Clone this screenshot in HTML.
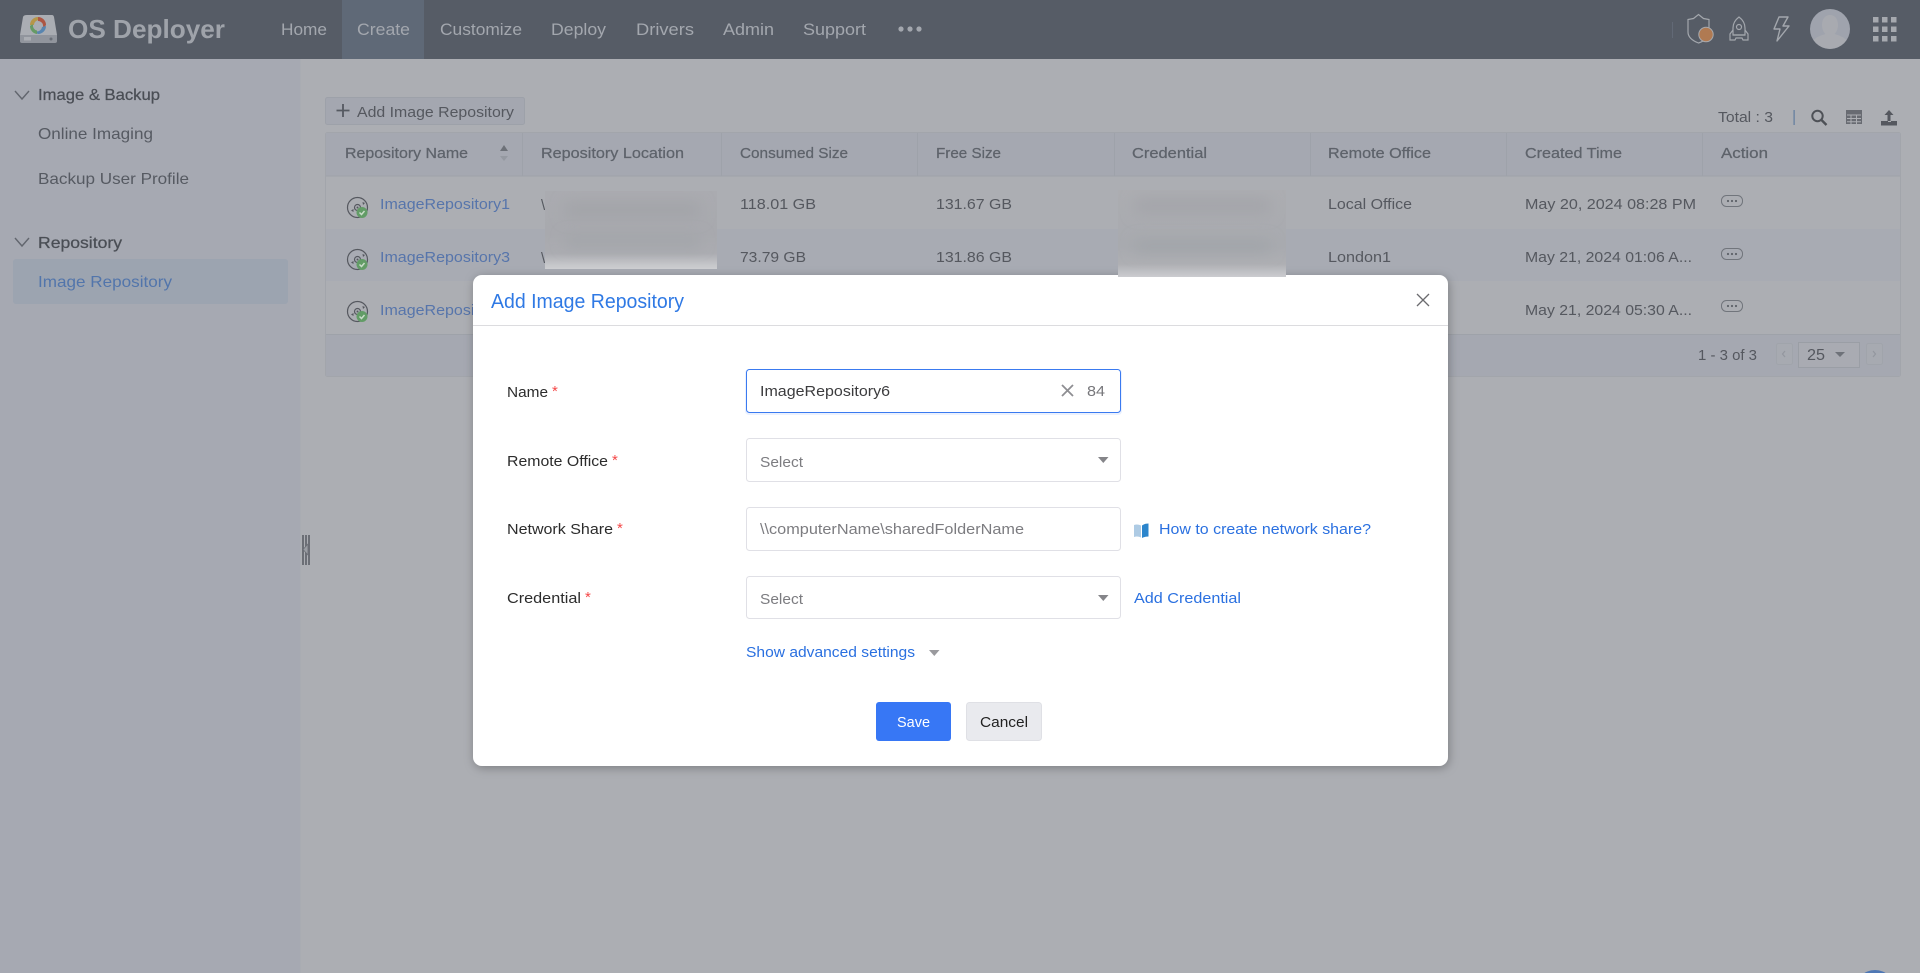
<!DOCTYPE html>
<html lang="en"><head><meta charset="utf-8"><title>OS Deployer - Add Image Repository</title>
<style>
html,body{margin:0;padding:0;width:1920px;height:973px;overflow:hidden;background:#acaeb3}
svg{display:block;position:absolute;left:0;top:0}
text{font-family:"Liberation Sans",Arial,sans-serif;font-size:15px;white-space:pre}
.nav{font-size:17px;fill:#a3a7ae}
.sec{font-size:16px;fill:#4a4e55;stroke:#4a4e55;stroke-width:.25}
.item{font-size:16px;fill:#565a62}
.th{fill:#5e636b;stroke:#5e636b;stroke-width:.25}
.td{fill:#55585f}
.lnk{fill:#5775ab}
.lab{fill:#2c2c2c}
.ph{fill:#7c7c80}
.blue{fill:#2a70e0}
.req{fill:#f54848;font-size:15px}
</style></head><body>
<svg width="1920" height="973" viewBox="0 0 1920 973" xmlns="http://www.w3.org/2000/svg">
<defs>
<filter id="sh" x="-5%" y="-5%" width="110%" height="110%"><feDropShadow dx="1" dy="2" stdDeviation="5" flood-color="#000" flood-opacity=".28"/></filter>
<filter id="bl" x="-20%" y="-200%" width="140%" height="500%"><feGaussianBlur stdDeviation="7"/></filter>
<linearGradient id="g1" x1="0" y1="0" x2="0" y2="1"><stop offset="0" stop-color="#aaabb0"/><stop offset=".55" stop-color="#a8a9ae"/><stop offset=".8" stop-color="#abacb1"/><stop offset="1" stop-color="#cfd0d3"/></linearGradient>
<linearGradient id="g2" x1="0" y1="0" x2="0" y2="1"><stop offset="0" stop-color="#acadb1"/><stop offset=".65" stop-color="#a8aaaf"/><stop offset=".85" stop-color="#aeafb3"/><stop offset="1" stop-color="#cbccd0"/></linearGradient>
<clipPath id="c1"><rect x="545" y="191" width="172" height="78"/></clipPath>
<clipPath id="c2"><rect x="1118" y="190" width="168" height="87"/></clipPath>
<g id="disc">
<circle cx="10.5" cy="10.5" r="10" fill="none" stroke="#55585f" stroke-width="1.2"/>
<circle cx="10.5" cy="10.5" r="3" fill="none" stroke="#55585f" stroke-width="1.2"/>
<circle cx="10.5" cy="10.5" r="1" fill="#55585f"/>
<path d="M4 13.500l2.500-1.500v3zM15.500 5l2.500 1-2 2zM5 6.500l2 1.500" fill="#55585f"/>
<circle cx="15" cy="15.500" r="5.500" fill="#629c66"/>
<path d="M12.500 15.500l2 2 3-3.500" fill="none" stroke="#c9dcc9" stroke-width="1.500"/>
</g>
<g id="more">
<rect x="0.500" y="0.500" width="21" height="11" rx="5" fill="none" stroke="#71757c"/>
<circle cx="7" cy="6" r="1.100" fill="#5e6269"/><circle cx="11" cy="6" r="1.100" fill="#5e6269"/><circle cx="15" cy="6" r="1.100" fill="#5e6269"/>
</g>
</defs>

<!-- backgrounds -->
<rect width="1920" height="973" fill="#acaeb3"/>
<rect x="0" y="59" width="300" height="914" fill="#a6a9b2"/>
<rect x="300" y="59" width="1" height="914" fill="#a9acb2"/>
<rect width="1920" height="59" fill="#565c66"/>
<rect x="342" width="82" height="59" fill="#5f6977"/>

<!-- logo -->
<path d="M27 15h25q1.500 0 2 2l3 18H20l3-18q.5-2 4-2z" fill="#aaadb3"/>
<path d="M20 35h37v6q0 2-2 2H22q-2 0-2-2z" fill="#91959d"/>
<rect x="24" y="37" width="7" height="3.500" fill="#aaadb3"/><circle cx="51" cy="39" r="1.500" fill="#6a6f78"/>
<circle cx="38" cy="25.500" r="8.500" fill="#aaadb3"/>
<path d="M30 25a8 8 0 0 1 8-8c2 1 3 2 3 3.500a5 5 0 0 0-7 4.500z" fill="#b59649"/>
<path d="M38 17a8 8 0 0 1 8 8c-1 1.500-2 2-3 2a5 5 0 0 0-5-6z" fill="#ad5643"/>
<path d="M46 26a8 8 0 0 1-8 8c-2-1-3-2-3-3a5 5 0 0 0 7-4z" fill="#5885b0"/>
<path d="M37 34a8 8 0 0 1-7-8c1-1 2-1.500 3-1.500a5 5 0 0 0 4 6z" fill="#669a65"/>
<text x="68" y="38" textLength="157" lengthAdjust="spacingAndGlyphs" style="font-size:26px;font-weight:700" fill="#9fa3aa">OS Deployer</text>

<!-- nav -->
<text class="nav" x="281" y="35" textLength="46" lengthAdjust="spacingAndGlyphs">Home</text>
<text class="nav" x="357" y="35" textLength="53" lengthAdjust="spacingAndGlyphs">Create</text>
<text class="nav" x="440" y="35" textLength="82" lengthAdjust="spacingAndGlyphs">Customize</text>
<text class="nav" x="551" y="35" textLength="55" lengthAdjust="spacingAndGlyphs">Deploy</text>
<text class="nav" x="636" y="35" textLength="58" lengthAdjust="spacingAndGlyphs">Drivers</text>
<text class="nav" x="723" y="35" textLength="51" lengthAdjust="spacingAndGlyphs">Admin</text>
<text class="nav" x="803" y="35" textLength="63" lengthAdjust="spacingAndGlyphs">Support</text>
<circle cx="901" cy="29" r="2.600" fill="#a3a7ae"/><circle cx="910" cy="29" r="2.600" fill="#a3a7ae"/><circle cx="919" cy="29" r="2.600" fill="#a3a7ae"/>

<!-- header right icons -->
<rect x="1672" y="22" width="1" height="16" fill="#626976"/>
<path d="M1698.500 14.500l5 4 5.500 1v13q0 7-10.500 10.500Q1688 39 1688 32V19.500l5.500-1z" fill="none" stroke="#a3a7ad" stroke-width="1.200"/>
<circle cx="1706" cy="34.500" r="7.200" fill="#b07a52" stroke="#a8aaae" stroke-width="1"/>
<path d="M1739 17c-4 3-6 7-6 11v7h12v-7c0-4-2-8-6-11z" fill="none" stroke="#a3a7ad" stroke-width="1.200"/>
<circle cx="1739" cy="27" r="2.500" fill="none" stroke="#a3a7ad" stroke-width="1.200"/>
<path d="M1733 30l-3 4v6h5l1-2h6l1 2h5v-6l-3-4M1733 35h12" fill="none" stroke="#a3a7ad" stroke-width="1.200"/>
<path d="M1779 17h9l-5 9h6l-12 15 3-12h-6z" fill="none" stroke="#a3a7ad" stroke-width="1.400" stroke-linejoin="round"/>
<circle cx="1830" cy="29" r="20" fill="#9fa3ad"/>
<path d="M1830 15c5 0 8 4 8 10 0 4-1.500 7-3.500 9 5 1.500 9 3 12 6a20 20 0 0 1-33 0c3-3 7-4.500 12-6-2-2-3.500-5-3.500-9 0-6 3-10 8-10z" fill="#a8aab0"/>
<g fill="#a6a9af">
<rect x="1873" y="17" width="5.500" height="5.500"/><rect x="1882" y="17" width="5.500" height="5.500"/><rect x="1891" y="17" width="5.500" height="5.500"/>
<rect x="1873" y="26.500" width="5.500" height="5.500"/><rect x="1882" y="26.500" width="5.500" height="5.500"/><rect x="1891" y="26.500" width="5.500" height="5.500"/>
<rect x="1873" y="36" width="5.500" height="5.500"/><rect x="1882" y="36" width="5.500" height="5.500"/><rect x="1891" y="36" width="5.500" height="5.500"/>
</g>

<!-- sidebar -->
<path d="M15 91l7 8 7-8" fill="none" stroke="#62666e" stroke-width="1.400"/>
<text class="sec" x="38" y="100" textLength="122" lengthAdjust="spacingAndGlyphs">Image &amp; Backup</text>
<text class="item" x="38" y="139" textLength="115" lengthAdjust="spacingAndGlyphs">Online Imaging</text>
<text class="item" x="38" y="184" textLength="151" lengthAdjust="spacingAndGlyphs">Backup User Profile</text>
<path d="M15 238l7 8 7-8" fill="none" stroke="#62666e" stroke-width="1.400"/>
<text class="sec" x="38" y="248" textLength="84" lengthAdjust="spacingAndGlyphs">Repository</text>
<rect x="13" y="259" width="275" height="45" rx="3" fill="#9ca4b0"/>
<text class="item" x="38" y="287" textLength="134" lengthAdjust="spacingAndGlyphs" style="fill:#5275ab">Image Repository</text>

<!-- splitter -->
<g fill="#6c6f76"><rect x="302" y="535" width="2" height="30"/><rect x="305" y="535" width="2" height="30"/><rect x="308" y="535" width="2" height="30"/></g>
<path d="M308 544l-5 5.500 5 5.500z" fill="#9a9da3" stroke="#6c6f76" stroke-width=".8"/>

<!-- toolbar -->
<rect x="325.500" y="97.500" width="199" height="27" rx="2" fill="#a4a7b0" stroke="#9da1a9"/>
<path d="M343 104v13M336.500 110.500h13" stroke="#555961" stroke-width="1.800"/>
<text x="357" y="117" textLength="157" lengthAdjust="spacingAndGlyphs" fill="#55585f">Add Image Repository</text>
<text x="1718" y="122" textLength="55" lengthAdjust="spacingAndGlyphs" fill="#55585f">Total : 3</text>
<rect x="1793.500" y="110" width="1.200" height="15" fill="#5f7c9e"/>
<circle cx="1817.500" cy="116" r="5.200" fill="none" stroke="#4e5157" stroke-width="2"/><path d="M1821.500 120l5 5" stroke="#4e5157" stroke-width="2.400"/>
<rect x="1846" y="110" width="16" height="14" fill="#686b72"/>
<path d="M1847 115h14M1847 118.500h14M1847 121.700h14M1851 115v9M1856.500 115v9" stroke="#acaeb3" stroke-width="1"/>
<path d="M1889 110l-4.500 5h3v6h3v-6h3z" fill="#55585f"/><path d="M1881 121h7v1h3v-1h6v4.500h-16z" fill="#55585f"/>

<!-- table -->
<rect x="325.500" y="132.500" width="1575" height="244" rx="2" fill="#acaeb3" stroke="#a2a5ab"/>
<rect x="326" y="133" width="1574" height="43" fill="#a5a8b1"/>
<rect x="326" y="175.500" width="1574" height="1" fill="#9ea2a9"/>
<rect x="326" y="229" width="1574" height="52" fill="#a8abb3"/>
<rect x="326" y="334" width="1574" height="42" fill="#a5a8b1"/>
<rect x="326" y="334" width="1574" height="1" fill="#9ea2a9"/>
<g fill="#9ea2aa">
<rect x="522" y="133" width="1" height="43"/><rect x="721" y="133" width="1" height="43"/><rect x="917" y="133" width="1" height="43"/><rect x="1114" y="133" width="1" height="43"/><rect x="1310" y="133" width="1" height="43"/><rect x="1506" y="133" width="1" height="43"/><rect x="1702" y="133" width="1" height="43"/>
</g>
<text class="th" x="345" y="158" textLength="123" lengthAdjust="spacingAndGlyphs">Repository Name</text>
<path d="M504 145l-4 6h8z" fill="#6d7178"/><path d="M504 161l-4-5h8z" fill="#9599a1"/>
<text class="th" x="541" y="158" textLength="143" lengthAdjust="spacingAndGlyphs">Repository Location</text>
<text class="th" x="740" y="158" textLength="108" lengthAdjust="spacingAndGlyphs">Consumed Size</text>
<text class="th" x="936" y="158" textLength="65" lengthAdjust="spacingAndGlyphs">Free Size</text>
<text class="th" x="1132" y="158" textLength="75" lengthAdjust="spacingAndGlyphs">Credential</text>
<text class="th" x="1328" y="158" textLength="103" lengthAdjust="spacingAndGlyphs">Remote Office</text>
<text class="th" x="1525" y="158" textLength="97" lengthAdjust="spacingAndGlyphs">Created Time</text>
<text class="th" x="1721" y="158" textLength="47" lengthAdjust="spacingAndGlyphs">Action</text>

<!-- row 1 -->
<use href="#disc" x="347" y="197"/>
<text class="lnk" x="380" y="209" textLength="130" lengthAdjust="spacingAndGlyphs">ImageRepository1</text>
<text class="td" x="541" y="210">\</text>
<text class="td" x="740" y="209" textLength="76" lengthAdjust="spacingAndGlyphs">118.01 GB</text>
<text class="td" x="936" y="209" textLength="76" lengthAdjust="spacingAndGlyphs">131.67 GB</text>
<text class="td" x="1328" y="209" textLength="84" lengthAdjust="spacingAndGlyphs">Local Office</text>
<text class="td" x="1525" y="209" textLength="171" lengthAdjust="spacingAndGlyphs">May 20, 2024 08:28 PM</text>
<use href="#more" x="1721" y="195"/>
<!-- row 2 -->
<use href="#disc" x="347" y="249"/>
<text class="lnk" x="380" y="262" textLength="130" lengthAdjust="spacingAndGlyphs">ImageRepository3</text>
<text class="td" x="541" y="263">\</text>
<text class="td" x="740" y="262" textLength="66" lengthAdjust="spacingAndGlyphs">73.79 GB</text>
<text class="td" x="936" y="262" textLength="76" lengthAdjust="spacingAndGlyphs">131.86 GB</text>
<text class="td" x="1328" y="262" textLength="63" lengthAdjust="spacingAndGlyphs">London1</text>
<text class="td" x="1525" y="262" textLength="167" lengthAdjust="spacingAndGlyphs">May 21, 2024 01:06 A...</text>
<use href="#more" x="1721" y="248"/>
<!-- row 3 -->
<use href="#disc" x="347" y="301"/>
<text class="lnk" x="380" y="315" textLength="130" lengthAdjust="spacingAndGlyphs">ImageRepository5</text>
<text class="td" x="1525" y="315" textLength="167" lengthAdjust="spacingAndGlyphs">May 21, 2024 05:30 A...</text>
<use href="#more" x="1721" y="300"/>

<!-- pagination -->
<text x="1698" y="360" textLength="59" lengthAdjust="spacingAndGlyphs" fill="#55585f">1 - 3 of 3</text>
<rect x="1776.500" y="343.500" width="16" height="21" rx="2" fill="#a7aab1" stroke="#a0a4ab"/>
<path d="M1785 351l-2.500 3 2.500 3" fill="none" stroke="#93979f" stroke-width="1.200"/>
<rect x="1798.500" y="342.500" width="61" height="25" fill="#a9abb2" stroke="#9a9ea5"/>
<text x="1807" y="360" textLength="18" lengthAdjust="spacingAndGlyphs" style="font-size:16px" fill="#55585f">25</text>
<path d="M1835 352h10l-5 5z" fill="#6e7279"/>
<rect x="1866.500" y="343.500" width="16" height="21" rx="2" fill="#a7aab1" stroke="#a0a4ab"/>
<path d="M1873 351l2.500 3-2.500 3" fill="none" stroke="#93979f" stroke-width="1.200"/>

<!-- blurred boxes -->
<g clip-path="url(#c1)"><rect x="545" y="191" width="172" height="78" fill="url(#g1)"/>
<rect x="565" y="202" width="135" height="16" fill="#a3a4a9" filter="url(#bl)"/><rect x="565" y="236" width="135" height="10" fill="#a1a4a9" filter="url(#bl)"/></g>

<!-- corner widget -->
<circle cx="1875" cy="990" r="20" fill="#4f78b5"/>

<!-- dialog -->
<rect x="473" y="275" width="975" height="491" rx="9" fill="#fff" filter="url(#sh)"/>
<g clip-path="url(#c2)"><rect x="1118" y="190" width="168" height="87" fill="url(#g2)"/>
<rect x="1135" y="198" width="135" height="16" fill="#a4a5aa" filter="url(#bl)"/><rect x="1135" y="240" width="135" height="12" fill="#a1a4a9" filter="url(#bl)"/></g>
<rect x="473" y="325" width="975" height="1" fill="#dcdcdf"/>
<text x="491" y="308" textLength="193" lengthAdjust="spacingAndGlyphs" style="font-size:20px" fill="#2f79e4">Add Image Repository</text>
<path d="M1417 294l12 12M1429 294l-12 12" stroke="#6b6b6f" stroke-width="1.300"/>

<text class="lab" x="507" y="397" textLength="41" lengthAdjust="spacingAndGlyphs">Name</text><text class="req" x="552" y="396">*</text>
<text class="lab" x="507" y="466" textLength="101" lengthAdjust="spacingAndGlyphs">Remote Office</text><text class="req" x="612" y="465">*</text>
<text class="lab" x="507" y="534" textLength="106" lengthAdjust="spacingAndGlyphs">Network Share</text><text class="req" x="617" y="533">*</text>
<text class="lab" x="507" y="603" textLength="74" lengthAdjust="spacingAndGlyphs">Credential</text><text class="req" x="585" y="602">*</text>

<rect x="745" y="369" width="377" height="46" rx="4" fill="#3777f5" opacity=".1"/>
<rect x="746.500" y="369.500" width="374" height="43" rx="3" fill="#fff" stroke="#3a7af0" stroke-width="1"/>
<text x="760" y="396" textLength="130" lengthAdjust="spacingAndGlyphs" fill="#3c3c3e">ImageRepository6</text>
<path d="M1062 385l11 11M1073 385l-11 11" stroke="#8e8e92" stroke-width="1.800"/>
<text x="1087" y="396" textLength="18" lengthAdjust="spacingAndGlyphs" fill="#77777b">84</text>

<rect x="746.500" y="438.500" width="374" height="43" rx="3" fill="#fff" stroke="#e0e0e6"/>
<text class="ph" x="760" y="467" textLength="43" lengthAdjust="spacingAndGlyphs">Select</text>
<path d="M1098 457h10.500l-5.200 6z" fill="#858589"/>

<rect x="746.500" y="507.500" width="374" height="43" rx="3" fill="#fff" stroke="#e0e0e6"/>
<text class="ph" x="760" y="534" textLength="264" lengthAdjust="spacingAndGlyphs">\\computerName\sharedFolderName</text>
<path d="M1134 525c2.500-1 5-.5 7 .5v12c-2-1-4.500-1.500-7-.5z" fill="#aecbe4"/>
<path d="M1142 525.500c2-1.500 4-2 6.500-2v13c-2.500 0-4.500.5-6.500 1.500z" fill="#2b85cc"/>
<text class="blue" x="1159" y="534" textLength="212" lengthAdjust="spacingAndGlyphs">How to create network share?</text>

<rect x="746.500" y="576.500" width="374" height="42" rx="3" fill="#fff" stroke="#e0e0e6"/>
<text class="ph" x="760" y="604" textLength="43" lengthAdjust="spacingAndGlyphs">Select</text>
<path d="M1098 595h10.500l-5.200 6z" fill="#858589"/>
<text class="blue" x="1134" y="603" textLength="107" lengthAdjust="spacingAndGlyphs">Add Credential</text>

<text class="blue" x="746" y="657" textLength="169" lengthAdjust="spacingAndGlyphs">Show advanced settings</text>
<path d="M929 650h10.500l-5.200 6z" fill="#9a9a9e"/>

<rect x="876" y="702" width="75" height="39" rx="3" fill="#3777f5"/>
<text x="897" y="727" textLength="33" lengthAdjust="spacingAndGlyphs" fill="#fff">Save</text>
<rect x="966.500" y="702.500" width="75" height="38" rx="3" fill="#e9eaee" stroke="#dfe0e5"/>
<text x="980" y="727" textLength="48" lengthAdjust="spacingAndGlyphs" fill="#222">Cancel</text>
</svg>
</body></html>
